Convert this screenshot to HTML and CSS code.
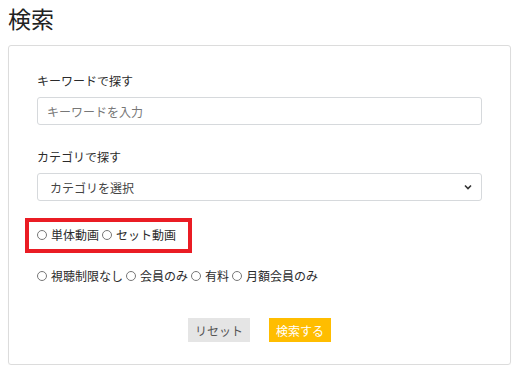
FILE: index.html
```html
<!DOCTYPE html>
<html lang="ja">
<head>
    <meta charset="UTF-8">
    <meta name="viewport" content="width=device-width, initial-scale=1.0">
    <title>検索</title>
    <link rel="stylesheet" href="styles.css">
</head>
<body>
    <h1 class="page-title">検索</h1>

    <div class="card">
        <div class="form-group">
            <label class="field-label" for="keyword">キーワードで探す</label>
            <input type="text" id="keyword" class="field" placeholder="キーワードを入力">
        </div>

        <div class="form-group">
            <label class="field-label" for="category">カテゴリで探す</label>
            <select id="category" class="field select">
                <option value="">カテゴリを選択</option>
            </select>
        </div>

        <div class="radio-row highlight">
            <label class="radio"><input type="radio" name="type">単体動画</label>
            <label class="radio"><input type="radio" name="type">セット動画</label>
        </div>

        <div class="radio-row">
            <label class="radio"><input type="radio" name="limit">視聴制限なし</label>
            <label class="radio"><input type="radio" name="limit">会員のみ</label>
            <label class="radio"><input type="radio" name="limit">有料</label>
            <label class="radio"><input type="radio" name="limit">月額会員のみ</label>
        </div>

        <div class="actions">
            <button type="reset" class="btn btn-reset">リセット</button>
            <button type="submit" class="btn btn-search">検索する</button>
        </div>
    </div>
</body>
</html>
```

FILE: styles.css
```css
* {
    box-sizing: border-box;
    margin: 0;
    padding: 0;
}

body {
    font-family: "Noto Sans CJK JP", "Noto Sans", sans-serif;
    font-size: 12px;
    color: #333;
    background: #fff;
    padding: 0 7px 0 8px;
}

.page-title {
    font-size: 23px;
    font-weight: 400;
    line-height: 36px;
    color: #222;
}

.card {
    margin-top: 9px;
    border: 1px solid #dcdcdc;
    border-radius: 3px;
    box-shadow: 0 1px 1px rgba(0, 0, 0, 0.04);
    padding: 26px 28px 22px 28px;
}

.form-group + .form-group {
    margin-top: 23px;
}

.field-label {
    display: block;
    line-height: 18px;
    margin-bottom: 7px;
    color: #2b2b2b;
}

.field {
    display: block;
    width: 100%;
    height: 28px;
    border: 1px solid #d6d9dc;
    border-radius: 3px;
    padding: 0 9px;
    font-family: inherit;
    font-size: 12px;
    color: #444;
    background: #fff;
}

.field::placeholder {
    color: #777;
}

.select {
    appearance: none;
    -webkit-appearance: none;
    padding-left: 12px;
    background-image: url("data:image/svg+xml,%3Csvg xmlns='http://www.w3.org/2000/svg' width='8' height='6' viewBox='0 0 8 6'%3E%3Cpath d='M1 1.5l3 3 3-3' fill='none' stroke='%23333' stroke-width='1.6'/%3E%3C/svg%3E");
    background-repeat: no-repeat;
    background-position: right 9px center;
}

.radio-row {
    display: flex;
    align-items: center;
    gap: 3px;
    line-height: 18px;
    color: #2b2b2b;
    margin-top: 14px;
}

.highlight {
    width: fit-content;
    margin-top: 17px;
    margin-left: -12px;
    padding: 4px 12px 5px 8px;
    border: 4px solid #ea1c24;
}

.radio {
    display: inline-flex;
    align-items: center;
}

.radio input {
    appearance: none;
    -webkit-appearance: none;
    width: 10px;
    height: 10px;
    border: 1px solid #777;
    border-radius: 50%;
    margin: 0 4px 0 0;
    background: #fff;
}

.actions {
    display: flex;
    justify-content: center;
    gap: 19px;
    margin-top: 33px;
}

.btn {
    border: none;
    font-family: inherit;
    font-size: 12px;
    height: 24px;
    padding: 0 7px;
    cursor: pointer;
}

.btn-reset {
    background: #e5e5e5;
    color: #555;
}

.btn-search {
    background: #ffbd00;
    color: #fff;
}
```
